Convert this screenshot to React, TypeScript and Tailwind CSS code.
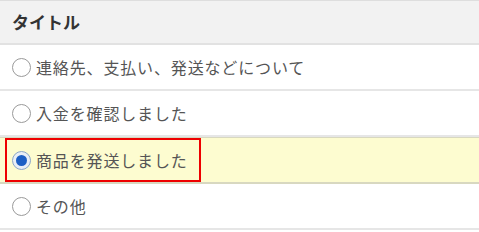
const items = [
  { label: "連絡先、支払い、発送などについて", checked: false },
  { label: "入金を確認しました", checked: false },
  { label: "商品を発送しました", checked: true },
  { label: "その他", checked: false },
];

const Radio = ({ checked }: { checked: boolean }) =>
  checked ? (
    <span className="flex h-[19px] w-[19px] shrink-0 items-center justify-center rounded-full border border-[#8aa6c8] bg-[#e8eef6]">
      <span className="h-[11px] w-[11px] rounded-full bg-[#1c5fc4]" />
    </span>
  ) : (
    <span className="h-[19px] w-[19px] shrink-0 rounded-full border-[1.5px] border-[#9a9a9a] bg-white" />
  );

export default function App() {
  return (
    <div
      className="h-[232px] w-[479px] bg-white"
      style={{ fontFamily: '"Noto Sans CJK JP", "Noto Sans", sans-serif' }}
    >
      <div className="border-t border-[#dedede]">
        <div className="flex h-[44px] items-center border-b-2 border-[#e2e2e2] bg-[#f2f2f2] pl-3 text-[17px] font-bold text-[#333]">
          タイトル
        </div>
        {items.map((item) => (
          <div
            key={item.label}
            className={
              item.checked
                ? "flex h-[47px] items-center border-t border-b-2 border-[#d8d8c0] bg-[#fdfcd0] pl-[5px]"
                : "flex h-[46px] items-center border-b-2 border-[#e6e6e6] bg-white pl-3"
            }
          >
            <label
              className={
                item.checked
                  ? "flex h-[44px] w-[196px] items-center gap-[5px] border-2 border-[#ee0000] pl-[5px]"
                  : "flex items-center gap-[5px]"
              }
            >
              <Radio checked={item.checked} />
              <span className="text-[16px] tracking-[0.85px] text-[#555]">{item.label}</span>
            </label>
          </div>
        ))}
      </div>
    </div>
  );
}
